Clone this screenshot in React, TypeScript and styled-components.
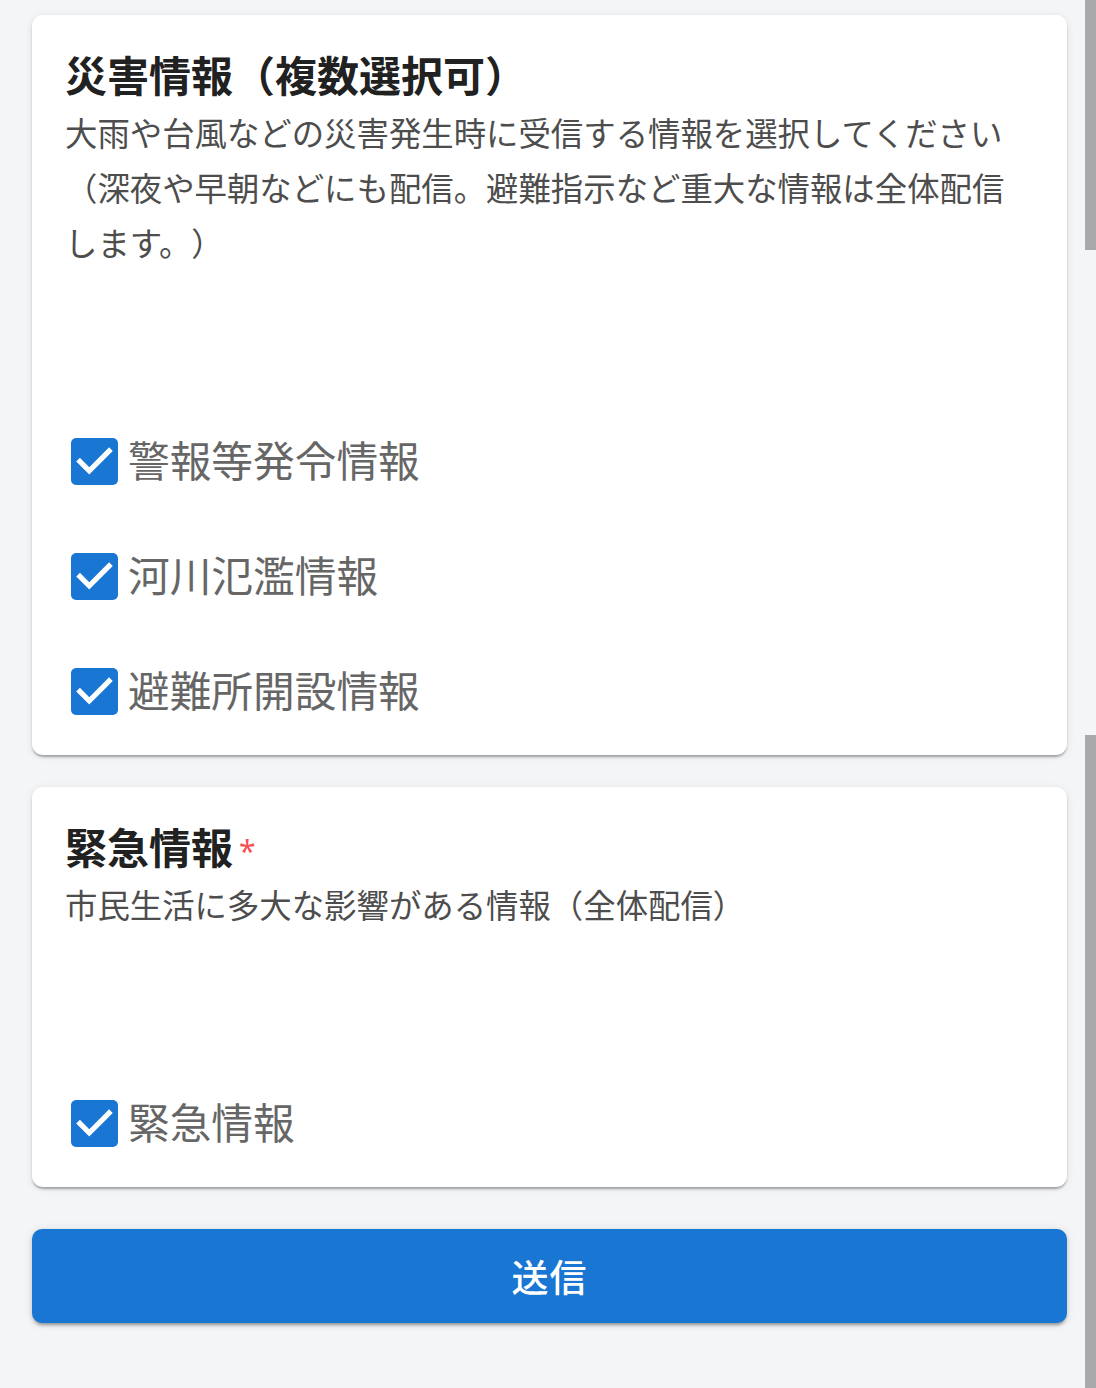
import React from "react";
import styled, { createGlobalStyle } from "styled-components";

const GlobalStyle = createGlobalStyle`
  html, body {
    margin: 0;
    padding: 0;
    background: #f4f5f7;
  }
  body {
    font-family: "Noto Sans CJK JP", "Noto Sans", sans-serif;
    -webkit-font-smoothing: antialiased;
    text-spacing-trim: space-all;
  }
`;

const Page = styled.div`
  display: flex;
  min-height: 1388px;
  background: #f4f5f7;
`;

const Main = styled.main`
  flex: 1;
  display: flex;
  flex-direction: column;
  padding: 15px 18px 60px 32px;
`;

const Rail = styled.div`
  width: 11px;
  display: flex;
  flex-direction: column;
`;

const RailThumb = styled.div<{ $h?: number }>`
  background: #a9a9ab;
  ${(p) => (p.$h ? `height: ${p.$h}px;` : `flex: 1;`)}
`;

const RailGap = styled.div<{ $h: number }>`
  height: ${(p) => p.$h}px;
`;

const Card = styled.section<{ $mb: number }>`
  background: #ffffff;
  border-radius: 11px;
  padding: 36px 33px 6px 33px;
  margin-bottom: ${(p) => p.$mb}px;
  box-shadow: 0 3px 2px -1px rgba(0, 0, 0, 0.22),
    0 2px 3px 0 rgba(0, 0, 0, 0.12), 0 1px 8px 0 rgba(0, 0, 0, 0.08);
`;

const Title = styled.h2`
  margin: 0;
  font-size: 42px;
  line-height: 46px;
  font-weight: 700;
  color: #212121;
  display: flex;
  align-items: center;
  text-spacing-trim: space-all;
`;

const Required = styled.span`
  color: #f25252;
  font-family: "Noto Sans", "DejaVu Sans", sans-serif;
  font-size: 30px;
  font-weight: 400;
  margin-left: 6px;
  line-height: 1;
  transform: translateY(5px);
`;

const Description = styled.p`
  margin: 7px 0 0 0;
  font-size: 32.4px;
  line-height: 55px;
  color: #4d4d4d;
  font-weight: 400;
  text-spacing-trim: space-all;
`;

const Options = styled.div`
  margin-top: 135px;
  display: flex;
  flex-direction: column;
`;

const OptionRow = styled.label`
  height: 115px;
  display: flex;
  align-items: center;
  padding-left: 6px;
  cursor: pointer;
`;

const Box = styled.span`
  width: 47px;
  height: 47px;
  flex: none;
  display: flex;
`;

const OptionText = styled.span`
  margin-left: 10px;
  font-size: 41.7px;
  line-height: 1;
  color: #666666;
  font-weight: 400;
  transform: translateY(-2px);
`;

const SubmitButton = styled.button`
  height: 94px;
  border: none;
  border-radius: 10px;
  background: #1976d2;
  color: #ffffff;
  font-family: "Noto Sans CJK JP", "Noto Sans", sans-serif;
  font-size: 37px;
  font-weight: 500;
  letter-spacing: 1px;
  cursor: pointer;
  box-shadow: 0 4px 3px -2px rgba(0, 0, 0, 0.25),
    0 2px 4px 0 rgba(0, 0, 0, 0.14), 0 1px 10px 0 rgba(0, 0, 0, 0.1);
`;

const CheckedBox: React.FC = () => (
  <Box>
    <svg width="47" height="47" viewBox="3 3 18 18" aria-hidden="true">
      <path
        fill="#1976d2"
        d="M19 3H5c-1.11 0-2 .9-2 2v14c0 1.1.89 2 2 2h14c1.11 0 2-.9 2-2V5c0-1.1-.89-2-2-2zm-9 14l-5-5 1.41-1.41L10 14.17l7.59-7.59L19 8l-9 9z"
      />
    </svg>
  </Box>
);

const Option: React.FC<{ label: string }> = ({ label }) => (
  <OptionRow>
    <CheckedBox />
    <OptionText>{label}</OptionText>
  </OptionRow>
);

export default function App() {
  return (
    <>
      <GlobalStyle />
      <Page>
        <Main>
          <Card $mb={32}>
            <Title>災害情報（複数選択可）</Title>
            <Description>
              大雨や台風などの災害発生時に受信する情報を選択してください（深夜や早朝などにも配信。避難指示など重大な情報は全体配信します。）
            </Description>
            <Options>
              <Option label="警報等発令情報" />
              <Option label="河川氾濫情報" />
              <Option label="避難所開設情報" />
            </Options>
          </Card>
          <Card $mb={42}>
            <Title>
              緊急情報<Required>*</Required>
            </Title>
            <Description>市民生活に多大な影響がある情報（全体配信）</Description>
            <Options>
              <Option label="緊急情報" />
            </Options>
          </Card>
          <SubmitButton type="button">送信</SubmitButton>
        </Main>
        <Rail>
          <RailThumb $h={250} />
          <RailGap $h={485} />
          <RailThumb />
        </Rail>
      </Page>
    </>
  );
}
